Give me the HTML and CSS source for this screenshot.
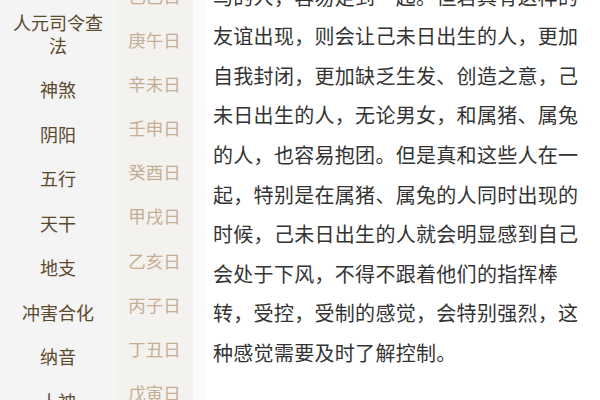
FILE: index.html
```html
<!DOCTYPE html>
<html lang="zh">
<head>
<meta charset="utf-8">
<link rel="stylesheet" href="styles.css">
</head>
<body>
<div class="page">
  <ul class="nav">
    <li>人元司令查法</li>
    <li>神煞</li>
    <li>阴阳</li>
    <li>五行</li>
    <li>天干</li>
    <li>地支</li>
    <li>冲害合化</li>
    <li>纳音</li>
    <li>十神</li>
  </ul>
  <ul class="days">
    <li>己巳日</li>
    <li>庚午日</li>
    <li>辛未日</li>
    <li>壬申日</li>
    <li>癸酉日</li>
    <li>甲戌日</li>
    <li>乙亥日</li>
    <li>丙子日</li>
    <li>丁丑日</li>
    <li>戊寅日</li>
  </ul>
  <div class="strip"></div>
  <div class="main">
    <p class="text">马的人，容易走到一起。但若真有这样的友谊出现，则会让己未日出生的人，更加自我封闭，更加缺乏生发、创造之意，己未日出生的人，无论男女，和属猪、属兔的人，也容易抱团。但是真和这些人在一起，特别是在属猪、属兔的人同时出现的时候，己未日出生的人就会明显感到自己会处于下风，不得不跟着他们的指挥棒转，受控，受制的感觉，会特别强烈，这种感觉需要及时了解控制。</p>
  </div>
</div>
</body>
</html>
```
FILE: styles.css
```css
html, body {
  margin: 0;
  padding: 0;
  background: #ffffff;
}
body {
  font-family: "Noto Sans CJK SC", "Noto Sans", sans-serif;
  width: 600px;
  height: 400px;
  overflow: hidden;
}
.page {
  display: flex;
  height: 400px;
  overflow: hidden;
}
ul {
  list-style: none;
  margin: 0;
  padding: 0;
}
.nav {
  width: 116px;
  flex: none;
  background: #f4f4f4;
  color: #5a4a2e;
  font-size: 18px;
  text-align: center;
}
.nav li {
  padding: 11px 6px;
  line-height: 22.5px;
}
.days {
  width: 77px;
  flex: none;
  background: #f4f2ef;
  color: #c4ae94;
  font-size: 17.5px;
  text-align: center;
  margin-top: -26px;
  padding-top: 0;
}
.days li {
  height: 44.1px;
  line-height: 44.1px;
}
.strip {
  width: 12px;
  flex: none;
  background: #fbfbfb;
}
.main {
  flex: 1;
  background: #ffffff;
  padding: 0 18px 0 8px;
}
.text {
  margin: -23.4px 0 0 0;
  font-size: 20px;
  letter-spacing: 0.3px;
  line-height: 39.6px;
  color: #333333;
}
```
